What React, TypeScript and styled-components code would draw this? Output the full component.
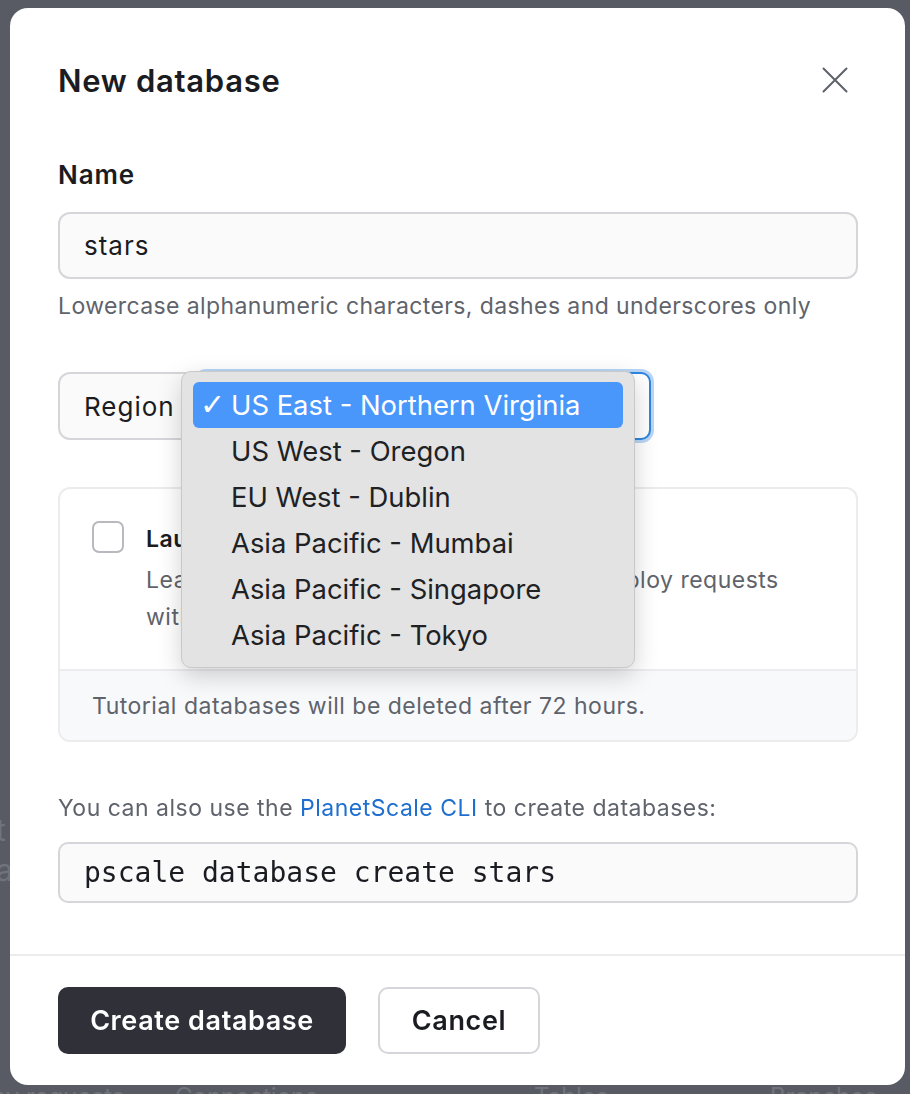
import { FC } from "react";
import styled, { createGlobalStyle } from "styled-components";

const GlobalStyle = createGlobalStyle`
  * {
    box-sizing: border-box;
  }

  body {
    margin: 0;
    background: #585b64;
    font-family: Inter, "Noto Sans", sans-serif;
    overflow: hidden;
  }
`;

const regions = [
  "US East - Northern Virginia",
  "US West - Oregon",
  "EU West - Dublin",
  "Asia Pacific - Mumbai",
  "Asia Pacific - Singapore",
  "Asia Pacific - Tokyo",
];

const App: FC = () => {
  return (
    <>
      <GlobalStyle />
      <Backdrop>
        <SideHints>
          <span>t</span>
          <span>a</span>
        </SideHints>
        <StatsRow>
          <span>Deploy requests</span>
          <span>Connections</span>
          <span>Tables</span>
          <span>Branches</span>
        </StatsRow>
      </Backdrop>

      <Modal>
        <Body>
          <Header>
            <Title>New database</Title>
            <CloseButton aria-label="Close">
              <svg width="26" height="26" viewBox="0 0 26 26" fill="none">
                <path
                  d="M1.5 1.5L24.5 24.5M24.5 1.5L1.5 24.5"
                  stroke="#5d6169"
                  strokeWidth="2"
                  strokeLinecap="round"
                />
              </svg>
            </CloseButton>
          </Header>

          <Label>Name</Label>
          <TextInput>stars</TextInput>
          <Hint>Lowercase alphanumeric characters, dashes and underscores only</Hint>

          <RegionField>
            <RegionLabel>Region</RegionLabel>
            <SelectBox />
            <Menu>
              {regions.map((r, i) => (
                <MenuItem key={r} $active={i === 0}>
                  <Check>{i === 0 ? "✓" : ""}</Check>
                  {r}
                </MenuItem>
              ))}
            </Menu>
          </RegionField>

          <Card>
            <CardMain>
              <Checkbox />
              <CardText>
                <CardTitle>Launch tutorial database</CardTitle>
                <CardDesc>
                  Learn how schema branches work with deploy requests
                  <br />
                  with a sample database.
                </CardDesc>
              </CardText>
            </CardMain>
            <CardFooter>Tutorial databases will be deleted after 72 hours.</CardFooter>
          </Card>

          <CliNote>
            You can also use the <a href="#cli">PlanetScale CLI</a> to create
            databases:
          </CliNote>
          <Code>pscale database create stars</Code>
        </Body>

        <Footer>
          <PrimaryButton>Create database</PrimaryButton>
          <SecondaryButton>Cancel</SecondaryButton>
        </Footer>
      </Modal>
    </>
  );
};

const Backdrop = styled.div`
  height: 1094px;
  display: flex;
  flex-direction: column;
  justify-content: flex-end;
  color: #70737b;
  font-size: 24px;
`;

const SideHints = styled.div`
  display: flex;
  flex-direction: column;
  gap: 6px;
  margin-left: -4px;
  margin-bottom: 197px;
  font-size: 30px;
  line-height: 34px;
`;

const StatsRow = styled.div`
  display: flex;
  margin-left: -60px;
  margin-bottom: -16px;
  line-height: 26px;

  span:nth-child(1) {
    width: 235px;
  }
  span:nth-child(2) {
    width: 359px;
  }
  span:nth-child(3) {
    width: 236px;
  }
`;

const Modal = styled.div`
  position: fixed;
  top: 8px;
  left: 10px;
  width: 895px;
  height: 1077px;
  background: #ffffff;
  border-radius: 18px;
  display: flex;
  flex-direction: column;
  color: #1b1c21;
`;

const Body = styled.div`
  padding: 46px 47px 0 48px;
  display: flex;
  flex-direction: column;
  flex: 1;
`;

const Header = styled.div`
  display: flex;
  align-items: center;
  justify-content: space-between;
  height: 52px;
`;

const Title = styled.h2`
  margin: 0;
  font-size: 31px;
  font-weight: 600;
  letter-spacing: 0.7px;
`;

const CloseButton = styled.button`
  border: none;
  background: none;
  padding: 0;
  margin-right: 10px;
  display: flex;
`;

const Label = styled.div`
  margin-top: 54px;
  font-size: 26px;
  font-weight: 600;
  line-height: 30px;
  letter-spacing: 0.9px;
`;

const TextInput = styled.div`
  margin-top: 22px;
  height: 67px;
  border: 2px solid #d6d6da;
  border-radius: 12px;
  background: #fafafb;
  padding: 0 24px;
  display: flex;
  align-items: center;
  font-size: 26px;
  letter-spacing: 1px;
`;

const Hint = styled.p`
  margin: 14px 0 0;
  font-size: 23px;
  line-height: 26px;
  letter-spacing: 0.4px;
  color: #5f636b;
`;

const RegionField = styled.div`
  position: relative;
  margin-top: 53px;
  width: 593px;
  height: 68px;
  border: 2px solid #d6d6da;
  border-radius: 12px;
  background: #fafafb;
  display: flex;
  align-items: center;
`;

const RegionLabel = styled.span`
  padding-left: 24px;
  font-size: 26px;
  letter-spacing: 1px;
  width: 136px;
`;

const SelectBox = styled.div`
  align-self: stretch;
  flex: 1;
  margin: -2px -2px -2px 0;
  border: 2px solid #2f86e0;
  border-radius: 10px;
  box-shadow: 0 0 0 3px rgba(100, 165, 235, 0.45);
  background: #ffffff;
`;

const Menu = styled.ul`
  position: absolute;
  top: -3px;
  left: 121px;
  width: 454px;
  margin: 0;
  padding: 10px 11px 9px;
  list-style: none;
  background: #e3e3e3;
  border: 1px solid #c9c9c9;
  border-radius: 10px;
  box-shadow: 0 8px 24px rgba(0, 0, 0, 0.18);
`;

const MenuItem = styled.li<{ $active: boolean }>`
  height: 46px;
  display: flex;
  align-items: center;
  border-radius: 6px;
  font-size: 27.4px;
  background: ${(p) => (p.$active ? "#4a97fc" : "transparent")};
  color: ${(p) => (p.$active ? "#ffffff" : "#202124")};
`;

const Check = styled.span`
  width: 38px;
  padding-left: 7px;
  font-family: "DejaVu Sans", sans-serif;
  font-size: 30px;
  font-weight: 700;
  line-height: 1;
`;

const Card = styled.div`
  margin-top: 47px;
  border: 2px solid #ececef;
  border-radius: 12px;
  overflow: hidden;
`;

const CardMain = styled.div`
  display: flex;
  gap: 22px;
  padding: 32px 32px 33px;
`;

const Checkbox = styled.span`
  flex: none;
  width: 32px;
  height: 32px;
  border: 2px solid #b8b9be;
  border-radius: 7px;
  background: #ffffff;
`;

const CardText = styled.div`
  display: flex;
  flex-direction: column;
`;

const CardTitle = styled.div`
  font-size: 23px;
  font-weight: 600;
  line-height: 36px;
  letter-spacing: 0.5px;
`;

const CardDesc = styled.div`
  margin-top: 5px;
  font-size: 23px;
  line-height: 37px;
  letter-spacing: 0.5px;
  color: #5f636b;
`;

const CardFooter = styled.div`
  border-top: 2px solid #ececef;
  background: #f8f9fb;
  padding: 0 32px;
  height: 71px;
  display: flex;
  align-items: center;
  font-size: 23px;
  letter-spacing: 0.5px;
  color: #5f636b;
`;

const CliNote = styled.p`
  margin: 53px 0 0;
  font-size: 23px;
  line-height: 26px;
  letter-spacing: 0.5px;
  color: #5f636b;

  a {
    color: #1f6fcf;
    text-decoration: none;
  }
`;

const Code = styled.div`
  margin-top: 21px;
  height: 61px;
  border: 2px solid #d6d6da;
  border-radius: 10px;
  background: #fafafb;
  padding: 0 24px;
  display: flex;
  align-items: center;
  font-family: "DejaVu Sans Mono", "Liberation Mono", monospace;
  font-size: 28px;
  color: #1b1c21;
`;

const Footer = styled.div`
  border-top: 2px solid #ececef;
  padding: 31px 48px 31px;
  display: flex;
  gap: 32px;
`;

const PrimaryButton = styled.button`
  height: 67px;
  width: 288px;
  border: none;
  border-radius: 10px;
  background: #2f3038;
  color: #ffffff;
  font-family: inherit;
  font-size: 27px;
  font-weight: 600;
  letter-spacing: 0.6px;
`;

const SecondaryButton = styled.button`
  height: 67px;
  width: 162px;
  border: 2px solid #d6d6da;
  border-radius: 10px;
  background: #ffffff;
  color: #1b1c21;
  font-family: inherit;
  font-size: 27px;
  font-weight: 600;
  letter-spacing: 0.6px;
`;

export default App;
